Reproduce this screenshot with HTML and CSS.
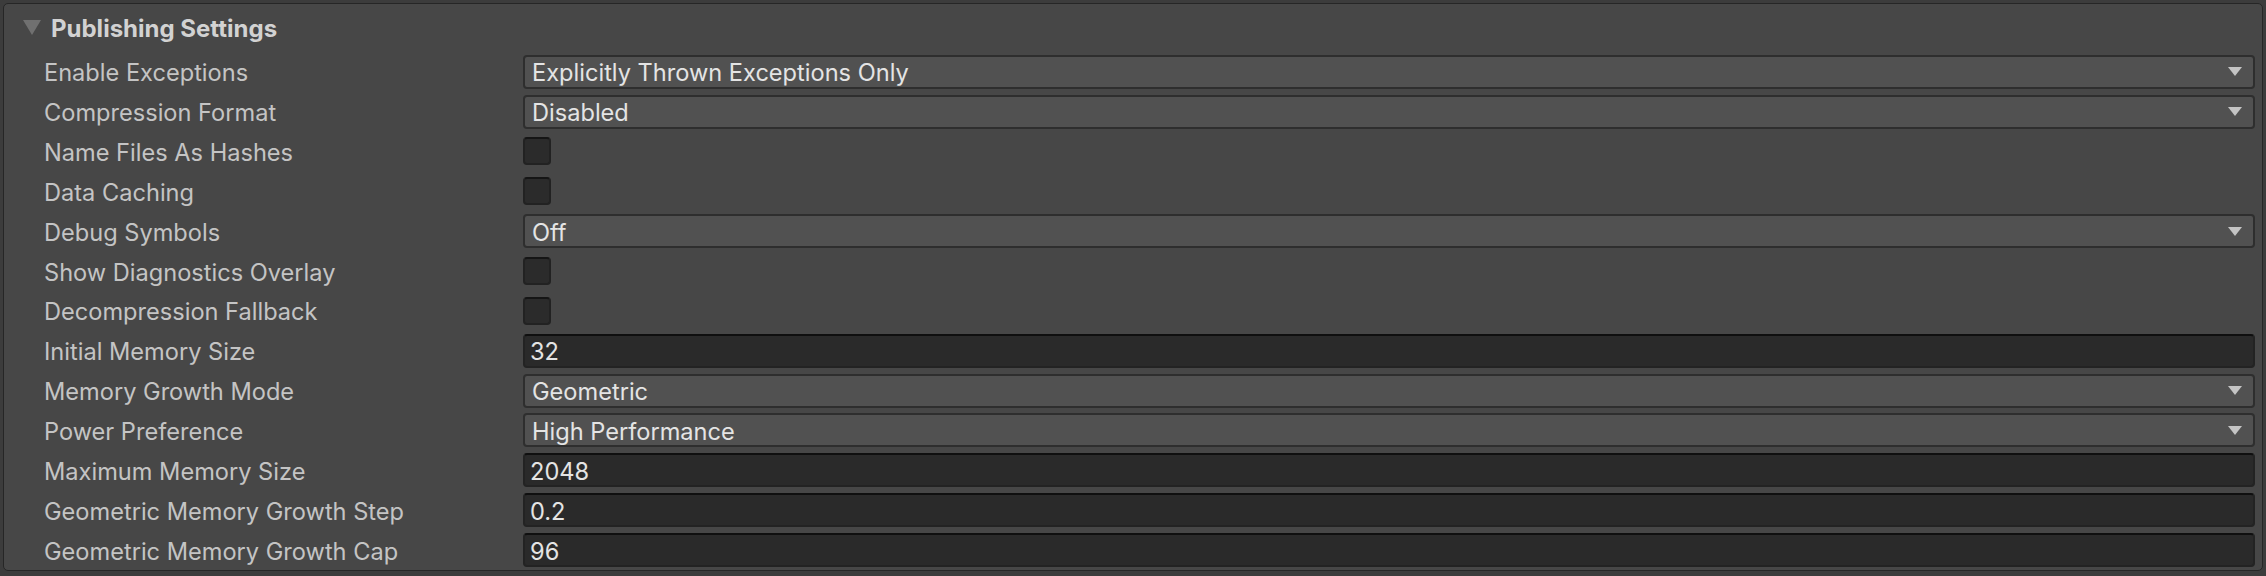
FILE: index.html
```html
<!DOCTYPE html>
<html>
<head>
<meta charset="utf-8">
<link rel="stylesheet" href="styles.css">
</head>
<body>
<div class="panel">
  <div class="header">
    <svg class="fold" width="18" height="15" viewBox="0 0 18 15"><polygon points="0,0 18,0 9,15" fill="#707070"/></svg>
    <span class="title">Publishing Settings</span>
  </div>
  <div class="row"><span class="label">Enable Exceptions</span><div class="dropdown"><span class="value">Explicitly Thrown Exceptions Only</span><svg class="arrow" width="14" height="9" viewBox="0 0 14 9"><polygon points="0,0 14,0 7,9" fill="#c4c4c4"/></svg></div></div>
  <div class="row"><span class="label">Compression Format</span><div class="dropdown"><span class="value">Disabled</span><svg class="arrow" width="14" height="9" viewBox="0 0 14 9"><polygon points="0,0 14,0 7,9" fill="#c4c4c4"/></svg></div></div>
  <div class="row"><span class="label">Name Files As Hashes</span><div class="check"></div></div>
  <div class="row"><span class="label">Data Caching</span><div class="check"></div></div>
  <div class="row"><span class="label">Debug Symbols</span><div class="dropdown"><span class="value">Off</span><svg class="arrow" width="14" height="9" viewBox="0 0 14 9"><polygon points="0,0 14,0 7,9" fill="#c4c4c4"/></svg></div></div>
  <div class="row"><span class="label">Show Diagnostics Overlay</span><div class="check"></div></div>
  <div class="row"><span class="label">Decompression Fallback</span><div class="check"></div></div>
  <div class="row"><span class="label">Initial Memory Size</span><div class="field"><span class="value">32</span></div></div>
  <div class="row"><span class="label">Memory Growth Mode</span><div class="dropdown"><span class="value">Geometric</span><svg class="arrow" width="14" height="9" viewBox="0 0 14 9"><polygon points="0,0 14,0 7,9" fill="#c4c4c4"/></svg></div></div>
  <div class="row"><span class="label">Power Preference</span><div class="dropdown"><span class="value">High Performance</span><svg class="arrow" width="14" height="9" viewBox="0 0 14 9"><polygon points="0,0 14,0 7,9" fill="#c4c4c4"/></svg></div></div>
  <div class="row"><span class="label">Maximum Memory Size</span><div class="field"><span class="value">2048</span></div></div>
  <div class="row"><span class="label">Geometric Memory Growth Step</span><div class="field"><span class="value">0.2</span></div></div>
  <div class="row"><span class="label">Geometric Memory Growth Cap</span><div class="field"><span class="value">96</span></div></div>
</div>
</body>
</html>
```
FILE: styles.css
```css
html, body {
  margin: 0;
  padding: 0;
  background: #3c3c3c;
  font-family: Inter, "Noto Sans", sans-serif;
}
.panel {
  margin: 3px;
  height: 568px;
  border: 1px solid #262626;
  border-radius: 5px;
  background: #474747;
  box-sizing: border-box;
  display: flex;
  flex-direction: column;
}
.header {
  height: 48px;
  display: flex;
  align-items: center;
  padding-left: 19px;
  gap: 10px;
}
.fold { flex: none; }
.title {
  font-size: 24px;
  font-weight: 700;
  color: #d2d2d2;
  padding-top: 2px;
}
.row {
  height: 40px;
  display: flex;
  align-items: center;
  padding-left: 40px;
  padding-right: 7px;
}
.label {
  width: 479px;
  flex: none;
  font-size: 23.6px;
  color: #c4c4c4;
  white-space: nowrap;
  padding-top: 2px;
}
.dropdown, .field {
  flex: 1;
  height: 34px;
  box-sizing: border-box;
  border-radius: 4px;
  display: flex;
  align-items: center;
  font-size: 23.6px;
  color: #e4e4e4;
}
.value { padding-top: 2px; }
.dropdown {
  background: #515151;
  border: 2px solid #2e2e2e;
  padding: 0 11px 0 7px;
  justify-content: space-between;
}
.field {
  background: #2a2a2a;
  border: 2px solid #232323;
  border-top-color: #0f0f0f;
  padding: 0 8px 0 5px;
}
.check {
  width: 28px;
  height: 28px;
  box-sizing: border-box;
  background: #2b2b2b;
  border: 2px solid #222222;
  border-top-color: #151515;
  border-radius: 4px;
}
.arrow { flex: none; }
```
